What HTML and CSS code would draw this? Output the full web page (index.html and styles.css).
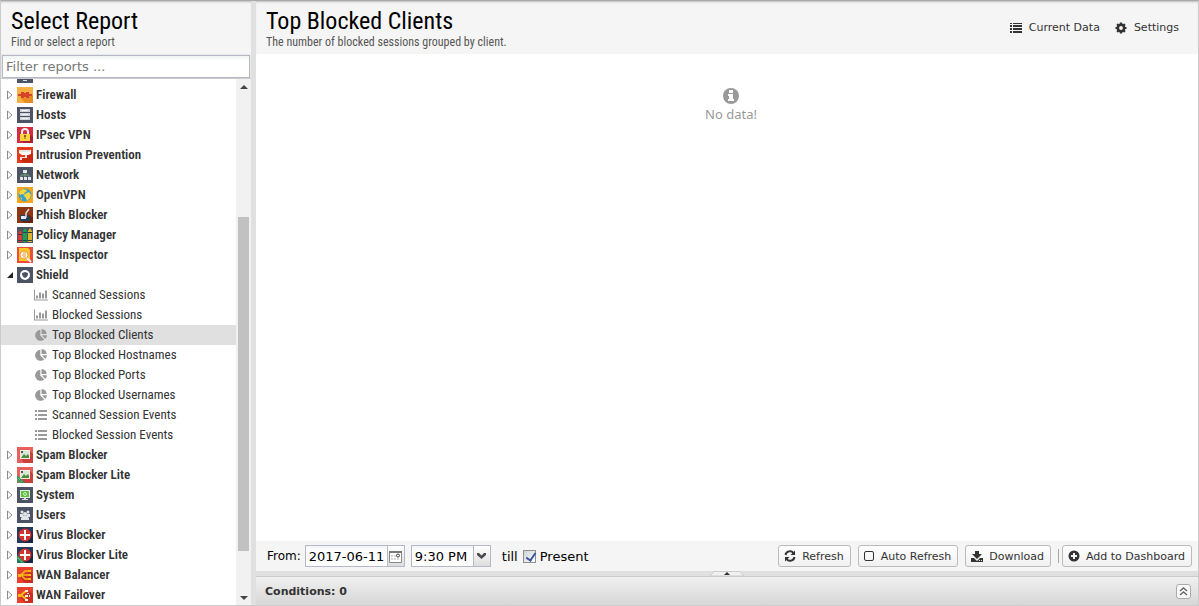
FILE: index.html
```
<!DOCTYPE html>
<html lang="en">
<head>
    <meta charset="utf-8">
    <title>Reports</title>
    <link rel="stylesheet" href="styles.css">
</head>
<body>
    <!-- icons shared by several rows -->
    <svg class="defs" aria-hidden="true">
        <symbol id="arrow" viewBox="0 0 6 10"><path d="M.5 1v8L5 5z" fill="#fff" stroke="#8c8c8c"/></symbol>
        <symbol id="arrow-open" viewBox="0 0 6 10"><path d="M6 2v6H0z" fill="#222"/></symbol>
        <symbol id="chart" viewBox="0 0 14 11"><path d="M0 0h1v10h13v1H0zM2 6h2v3H2zM5 3h2v6H5zM8 4h2v5H8zM11 1h2v8h-2z" fill="#999"/></symbol>
        <symbol id="pie" viewBox="0 0 14 12"><path d="M6.300 .8v5.600l4 4A5.500 5.500 0 1 1 6.300.8z M7.500 0a5.500 5.500 0 0 1 5.200 5H7.500z M7.900 6.300H13a5.500 5.500 0 0 1-1.700 3.600z" fill="#999"/></symbol>
        <symbol id="list" viewBox="0 0 14 10"><path d="M1 0h2v2H1zM4 0h9v2H4zM1 4h2v2H1zM4 4h9v2H4zM1 8h2v2H1zM4 8h9v2H4z" fill="#999"/></symbol>
        <symbol id="spam" viewBox="0 0 16 16"><path d="M0 0h16v16H0z" fill="#e9605a"/><path d="M13 4l3 3v9H7l-3-4z" fill="#c9403d"/><path d="M3 3h10v9H3z" fill="#f3eee4"/><path d="M4 4h8v7H4z" fill="#d8e6d4"/><path d="M4 11l3-4 2 2 2-2 1 2v2z" fill="#4c8c3c"/><path d="M4 4h2v2H4z" fill="#555"/></symbol>
        <symbol id="virus" viewBox="0 0 16 16"><path d="M0 0h16v16H0z" fill="#24395c"/><path d="M12 3l4 4v9H8l-5-4z" fill="#172745"/><circle cx="8" cy="8" r="6.500" fill="#d2342f"/><path d="M7 3h2v4h4v2H9v4H7V9H3V7h4z" fill="#fff"/></symbol>
        <symbol id="lite" viewBox="0 0 16 16"><path d="M0 8l8 8H4l-4-4z" fill="#2c9b5c"/><path d="M0 12l4 4H0z" fill="#2c9b5c" opacity=".6"/><path d="M1 11l4 4" stroke="#8fd0a8" stroke-dasharray="1 1"/></symbol>
    </svg>

    <aside class="sidebar">
        <header class="panel-header">
            <h1>Select Report</h1>
            <p>Find or select a report</p>
        </header>
        <div class="filter">
            <input type="text" aria-label="Filter reports" placeholder="Filter reports ...">
        </div>
        <div class="tree-wrap">
            <ul class="tree">
                <li><svg class="arrow"><use href="#arrow"/></svg><svg class="app" viewBox="0 0 16 16"><path d="M0 0h16v16H0z" fill="#4c5364"/><path d="M4 3h8v9H4zM6 13h4v1H6z" fill="#dfe3ea"/></svg></li>
                <li><svg class="arrow"><use href="#arrow"/></svg><svg class="app" viewBox="0 0 16 16"><path d="M0 0h16v16H0z" fill="#f4b042"/><path d="M12 6l4 3v7H8l-5-6z" fill="#e58c25"/><path d="M1 7h3V5h8v2h3v2h-3v2H4V9H1z" fill="#d4432a"/><path d="M7 5h2v1H7zM7 10h2v1H7z" fill="#f0a03a"/></svg>Firewall</li>
                <li><svg class="arrow"><use href="#arrow"/></svg><svg class="app" viewBox="0 0 16 16"><path d="M0 0h16v16H0z" fill="#4c5364"/><path d="M3 2h10v3H3zM3 6h10v3H3zM3 10h10v3H3z" fill="#cfd3d9"/><path d="M5 3h6v1H5zM5 7h6v1H5zM5 11h6v1H5z" fill="#eff1f3"/></svg>Hosts</li>
                <li><svg class="arrow"><use href="#arrow"/></svg><svg class="app" viewBox="0 0 16 16"><path d="M0 0h16v16H0z" fill="#d52b45"/><path d="M13 7l3 3v6H7l-4-3z" fill="#ab1f38"/><path d="M5 7V5a3 3 0 0 1 6 0v2" fill="none" stroke="#eee" stroke-width="2"/><path d="M3 7h10v7H3z" fill="#fbd440"/><path d="M7 8h2v2H7zM7.500 10h1v2h-1z" fill="#8a5b19"/></svg>IPsec VPN</li>
                <li><svg class="arrow"><use href="#arrow"/></svg><svg class="app" viewBox="0 0 16 16"><path d="M0 0h16v16H0z" fill="#e63b1a"/><path d="M14 5l2 2v9H7l-4-3z" fill="#c92b12"/><path d="M2 3h12v4l-3 1H5L2 6z" fill="#fff"/><path d="M8 8h2v3H5v2H3v-3h5z" fill="#f3dcd8"/><path d="M2 4h11" stroke="#c9c9c9"/></svg>Intrusion Prevention</li>
                <li><svg class="arrow"><use href="#arrow"/></svg><svg class="app" viewBox="0 0 16 16"><path d="M0 0h16v16H0z" fill="#4c5364"/><path d="M8 5v5M4 10V8h8v2" fill="none" stroke="#6fa27a"/><path d="M6 3h4v3H6zM3 10h3v3H3zM7 10h3v3H7zM11 10h3v3h-3z" fill="#e2e6e8"/></svg>Network</li>
                <li><svg class="arrow"><use href="#arrow"/></svg><svg class="app" viewBox="0 0 16 16"><path d="M0 0h16v16H0z" fill="#f9a51b"/><circle cx="8" cy="8" r="6.500" fill="#3aa0c8"/><path d="M3 4l3-2 4 1-1 2-2 1 1 2-3-1-2 1-1-2zM8 7l4-2 2 3-1 3-3 3-1-3-2-2zM3 10l2 1v2z" fill="#f6d63b"/></svg>OpenVPN</li>
                <li><svg class="arrow"><use href="#arrow"/></svg><svg class="app" viewBox="0 0 16 16"><path d="M0 0h16v16H0z" fill="#8e3712"/><path d="M12 8l4 3v5H7l-4-3z" fill="#682408"/><path d="M3 8h7l3 2v4H3z" fill="#24405f"/><path d="M4 9h5v3H4z" fill="#e7eaf0"/><path d="M12 2L9 6v4H7" fill="none" stroke="#d8dde3" stroke-width="1.500"/></svg>Phish Blocker</li>
                <li><svg class="arrow"><use href="#arrow"/></svg><svg class="app" viewBox="0 0 16 16"><path d="M0 0h16v16H0z" fill="#4c5364"/><path d="M1 6l2-3 2 3v9H1z" fill="#d63b35"/><path d="M6 4l2-3 2 3v11H6z" fill="#16a34a"/><path d="M11 4l2-3 2 3v11h-4z" fill="#dbb42b"/><path d="M1 7h4v1H1zM6 5h4v1H6zM11 5h4v1h-4zM1 13h4v1H1zM6 13h4v1H6zM11 13h4v1h-4z" fill="#333b44"/></svg>Policy Manager</li>
                <li><svg class="arrow"><use href="#arrow"/></svg><svg class="app" viewBox="0 0 16 16"><path d="M0 0h16v16H0z" fill="#ee4b3f"/><path d="M2 1h9l2 2v11H2z" fill="#f8c828"/><circle cx="7" cy="8" r="4" fill="#fff" stroke="#f19a29"/><path d="M5 8h4M6 6h3M6 10h3" stroke="#ef8d32"/><path d="M10 11l4 4" stroke="#eee" stroke-width="2"/></svg>SSL Inspector</li>
                <li><svg class="arrow"><use href="#arrow-open"/></svg><svg class="app" viewBox="0 0 16 16"><path d="M0 0h16v16H0z" fill="#4c5364"/><circle cx="8" cy="8" r="5" fill="#fff"/><path d="M8 5l3 1c0 3-1 4-3 5-2-1-3-2-3-5z" fill="#4c5364"/></svg>Shield</li>
                <li class="leaf"><svg><use href="#chart"/></svg>Scanned Sessions</li>
                <li class="leaf"><svg><use href="#chart"/></svg>Blocked Sessions</li>
                <li class="leaf selected"><svg><use href="#pie"/></svg>Top Blocked Clients</li>
                <li class="leaf"><svg><use href="#pie"/></svg>Top Blocked Hostnames</li>
                <li class="leaf"><svg><use href="#pie"/></svg>Top Blocked Ports</li>
                <li class="leaf"><svg><use href="#pie"/></svg>Top Blocked Usernames</li>
                <li class="leaf"><svg><use href="#list"/></svg>Scanned Session Events</li>
                <li class="leaf"><svg><use href="#list"/></svg>Blocked Session Events</li>
                <li><svg class="arrow"><use href="#arrow"/></svg><svg class="app"><use href="#spam"/></svg>Spam Blocker</li>
                <li><svg class="arrow"><use href="#arrow"/></svg><svg class="app"><use href="#spam"/><use href="#lite"/></svg>Spam Blocker Lite</li>
                <li><svg class="arrow"><use href="#arrow"/></svg><svg class="app" viewBox="0 0 16 16"><path d="M0 0h16v16H0z" fill="#4c5364"/><path d="M3 3h10v8H3z" fill="#e4ebdf"/><path d="M4 4h8v6H4z" fill="#5fbf3f"/><circle cx="8" cy="7" r="1.500" fill="none" stroke="#d8f0cf"/><path d="M7 11h2v1h2v1H5v-1h2z" fill="#d5d9dc"/></svg>System</li>
                <li><svg class="arrow"><use href="#arrow"/></svg><svg class="app" viewBox="0 0 16 16"><path d="M0 0h16v16H0z" fill="#4c5364"/><g fill="#e2e5e8"><circle cx="5" cy="5" r="1.500"/><circle cx="11" cy="5" r="1.500"/><circle cx="8" cy="7" r="2"/><path d="M3 7h3l1 3H3zM10 7h3v3H9zM4 13v-2l2-2h4l2 2v2z"/></g></svg>Users</li>
                <li><svg class="arrow"><use href="#arrow"/></svg><svg class="app"><use href="#virus"/></svg>Virus Blocker</li>
                <li><svg class="arrow"><use href="#arrow"/></svg><svg class="app"><use href="#virus"/><use href="#lite"/></svg>Virus Blocker Lite</li>
                <li><svg class="arrow"><use href="#arrow"/></svg><svg class="app" viewBox="0 0 16 16"><path d="M0 0h16v16H0z" fill="#e8402c"/><path d="M13 4l3 3v9H8l-5-6z" fill="#c92f22"/><path d="M3 8h9M12 4H8L4 8l4 4h4" fill="none" stroke="#fcb817" stroke-width="1.500"/><path d="M1 7h3v3H1zM11 3h3v2h-3zM11 7h3v2h-3zM11 11h3v2h-3z" fill="#fcb817"/></svg>WAN Balancer</li>
                <li><svg class="arrow"><use href="#arrow"/></svg><svg class="app" viewBox="0 0 16 16"><path d="M0 0h16v16H0z" fill="#e8402c"/><path d="M13 4l3 3v9H8l-5-6z" fill="#c92f22"/><path d="M9 4L4 8l5 4" fill="none" stroke="#fcb817" stroke-width="2"/><path d="M1 7h3v3H1z" fill="#fcb817"/><path d="M8 3h3v2H8zM10 6h2v1h-2zM8 8h3v2H8zM12 8h1v2h-1zM8 12h3v2H8z" fill="#fbeee0"/></svg>WAN Failover</li>
            </ul>
            <div class="scrollbar">
                <svg viewBox="0 0 8 4"><path d="M4 0l4 4H0z"/></svg>
                <div class="track"><div class="thumb"></div></div>
                <svg viewBox="0 0 8 4"><path d="M0 0h8L4 4z"/></svg>
            </div>
        </div>
    </aside>

    <main class="report">
        <header class="panel-header report-header">
            <div>
                <h1>Top Blocked Clients</h1>
                <p>The number of blocked sessions grouped by client.</p>
            </div>
            <nav class="header-tools">
                <button type="button">
                    <svg width="12" height="10" viewBox="0 0 12 10"><path d="M0 0h2v1H0zM3 0h9v1H3zM0 2h2v2H0zM3 2h9v2H3zM0 5h2v2H0zM3 5h9v2H3zM0 8h2v2H0zM3 8h9v2H3z"/></svg>
                    Current Data
                </button>
                <button type="button">
                    <svg width="12" height="12" viewBox="0 0 12 12"><circle cx="6" cy="6" r="3.200" fill="none" stroke="#333" stroke-width="2.600"/><path d="M6 .5v2M6 9.500v2M.5 6h2M9.500 6h2M2.100 2.100l1.400 1.400M8.500 8.500l1.400 1.400M2.100 9.900l1.400-1.400M8.500 3.500l1.400-1.400" stroke="#333" stroke-width="2.200"/></svg>
                    Settings
                </button>
            </nav>
        </header>

        <section class="chart">
            <svg width="16" height="16" viewBox="0 0 16 16"><circle cx="8" cy="8" r="8" fill="#999"/><path d="M6 2h4v3H6zM5 6h5v5h1v2H5v-2h1V8H5z" fill="#fff"/></svg>
            <p>No data!</p>
        </section>

        <footer class="toolbar">
            <label class="caption" for="from-date">From:</label>
            <div class="field date">
                <input type="text" id="from-date" value="2017-06-11">
                <button type="button" aria-label="Pick date">
                    <svg width="13" height="13" viewBox="0 0 13 13"><path d="M.5 1.500h12v11H.5z" fill="#fff" stroke="#888"/><path d="M0 1h13v2H0z" fill="#777"/><path d="M2 5h2v2H2zM5 5h2v2H5zM2 8h2v2H2zM5 8h2v2H5zM8 8h2v2H8z" fill="#d5d5d5"/><circle cx="9" cy="5.500" r="1.500" fill="#fff" stroke="#444"/></svg>
                </button>
            </div>
            <div class="field time">
                <select aria-label="Time"><option>9:30 PM</option></select>
                <span class="trigger"><svg width="9" height="6" viewBox="0 0 9 6"><path d="M0 0h2l2.500 2.500L7 0h2v2L4.500 6 0 2z" fill="#4a4a4a"/></svg></span>
            </div>
            <label class="till" for="present">till</label>
            <input type="checkbox" id="present" checked>
            <label for="present">Present</label>

            <div class="actions">
                <button type="button">
                    <svg width="12" height="12" viewBox="0 0 12 12"><path d="M1.500 5a4.500 4.500 0 0 1 8-2M10.500 7a4.500 4.500 0 0 1-8 2" fill="none" stroke="#333" stroke-width="2"/><path d="M11 .5V5H6.500zM1 11.500V7h4.500z"/></svg>
                    Refresh
                </button>
                <button type="button">
                    <svg width="11" height="10" viewBox="0 0 11 10"><rect x=".5" y=".5" width="9" height="9" rx="1.500" fill="none" stroke="#333"/></svg>
                    Auto Refresh
                </button>
                <button type="button">
                    <svg width="12" height="11" viewBox="0 0 12 11"><path d="M4 0h4v3h3L6 8 1 3h3zM0 7h3l3 3 3-3h3v4H0z"/><path d="M8 9h1v1H8zM10 9h1v1h-1z" fill="#eee"/></svg>
                    Download
                </button>
                <span class="separator"></span>
                <button type="button">
                    <svg width="12" height="12" viewBox="0 0 12 12"><circle cx="6" cy="6" r="5.500"/><path d="M5 3h2v2h2v2H7v2H5V7H3V5h2z" fill="#f5f5f5"/></svg>
                    Add to Dashboard
                </button>
            </div>
        </footer>

        <div class="splitter">
            <svg width="34" height="5" viewBox="0 0 34 5"><path d="M0 5l4-4.500h26L34 5z" fill="#f0f0f0" stroke="#ccc"/><path d="M17 1l3 3h-6z" fill="#333"/></svg>
        </div>

        <section class="conditions">
            <h2>Conditions: 0</h2>
            <button type="button" aria-label="Expand conditions">
                <svg width="9" height="9" viewBox="0 0 9 9"><path d="M1 4l3.500-3L8 4M1 8l3.500-3L8 8" fill="none" stroke="#666" stroke-width="1.400"/></svg>
            </button>
        </section>
    </main>
</body>
</html>
```

FILE: styles.css
```
* { box-sizing: border-box; }
body {
    margin: 0;
    height: 100vh;
    display: flex;
    gap: 5px;
    overflow: hidden;
    background: #e0e0e0;
    border: 1px solid #ccc;
    border-top-color: #aaa;
    font-family: "DejaVu Sans", sans-serif;
    font-size: 13px;
    color: #000;
}
h1, h2, p, ul { margin: 0; padding: 0; font-weight: normal; }
button { font-family: inherit; font-size: 11px; color: #333; cursor: pointer; }
svg { flex: none; display: block; }
.defs { position: absolute; width: 0; height: 0; }

.panel-header {
    height: 53px;
    padding: 7px 10px;
    background: #f5f5f5;
    box-shadow: inset 0 2px 2px -1px #bbb;
    font-family: "Roboto Condensed", "Liberation Sans Narrow", Roboto, sans-serif;
}
.panel-header h1 { font-size: 24px; line-height: 27px; }
.panel-header p { font-size: 12px; line-height: 15px; color: #555; }

/* report tree */
.sidebar { width: 250px; flex: none; display: flex; flex-direction: column; background: #f5f5f5; }
.filter { padding: 1px 1px 0; border-bottom: 1px solid #ccc; background: #e8e8e8; }
.filter input {
    display: block;
    width: 100%;
    height: 23px;
    padding: 0 3px;
    border: 1px solid #b5b8c8;
    background: linear-gradient(#f0f4f5, #fff 5px);
    font: inherit;
}
.filter input::placeholder { color: #777; }
.tree-wrap { flex: 1; min-height: 0; display: flex; overflow: hidden; background: #fff; }
.tree {
    flex: 1;
    margin-top: -14px;
    list-style: none;
    font-family: "Roboto Condensed", "Liberation Sans Narrow", Roboto, sans-serif;
    color: #333;
}
.tree li { display: flex; align-items: center; height: 20px; padding-left: 6px; line-height: 14px; font-weight: 600; white-space: nowrap; }
.tree .arrow { width: 6px; height: 10px; margin-right: 4px; }
.tree .app { width: 16px; height: 16px; margin-right: 3px; }
.tree .leaf { padding-left: 33px; font-weight: normal; }
.tree .leaf svg { width: 14px; height: 12px; margin-right: 4px; }
.tree .selected { background: #e0e0e0; }
.scrollbar {
    width: 15px;
    padding: 6px 2px 5px;
    display: flex;
    flex-direction: column;
    align-items: center;
    background: #f1f1f1;
}
.scrollbar > svg { width: 8px; height: 4px; fill: #444; }
.track { flex: 1; width: 11px; padding: 128px 0 45px; display: flex; }
.thumb { flex: 1; background: #c1c1c1; }

/* report */
.report { flex: 1; min-width: 0; display: flex; flex-direction: column; }
.report-header { display: flex; justify-content: space-between; }
.header-tools { display: flex; align-items: center; gap: 15px; height: 39px; padding-right: 9px; font-family: "DejaVu Sans", sans-serif; }
.header-tools button { display: flex; align-items: center; gap: 7px; padding: 0; border: 0; background: none; }
.header-tools svg, .actions svg { fill: #333; }
.chart {
    flex: 1;
    display: flex;
    flex-direction: column;
    align-items: center;
    padding: 34px 0 0 8px;
    background: #fff;
    color: #999;
    font-family: "Noto Sans", sans-serif;
}
.chart p { line-height: 20px; }

.toolbar { display: flex; align-items: center; height: 30px; padding: 0 6px 0 11px; background: #f5f5f5; }
.field { display: flex; height: 22px; border: 1px solid #b5b8c8; background: linear-gradient(#f0f4f5, #fff 5px); }
.field input, .field select { min-width: 0; flex: 1; padding: 0 3px; border: 0; background: none; font: inherit; appearance: none; }
.field button, .trigger {
    width: 17px;
    padding: 0;
    display: flex;
    align-items: center;
    justify-content: center;
    border: 0;
    border-left: 1px solid #b5b8c8;
    background: linear-gradient(#fff, #ddd);
}
.caption { font-size: 12px; }
.date { width: 100px; margin: 0 6px 0 4px; }
.time { width: 80px; }
.till { margin: 0 5px 0 11px; }
.toolbar input[type="checkbox"] {
    appearance: none;
    position: relative;
    width: 13px;
    height: 13px;
    margin: 0 4px 0 0;
    border: 1px solid #8e8f8f;
    background: linear-gradient(135deg, #ccd2d8, #fff);
}
.toolbar input[type="checkbox"]:checked::after {
    content: "";
    position: absolute;
    left: 4px;
    top: 0;
    width: 4px;
    height: 8px;
    border: solid #3c55a0;
    border-width: 0 2px 2px 0;
    transform: rotate(35deg);
}
.actions { display: flex; align-items: center; gap: 7px; margin-left: auto; }
.actions button {
    display: flex;
    align-items: center;
    gap: 6px;
    height: 22px;
    padding: 0 6px 0 5px;
    border: 1px solid #bbb;
    border-radius: 3px;
    background: linear-gradient(#fff, #f0f0f0);
    white-space: nowrap;
}
.separator { width: 1px; height: 14px; margin-right: -4px; background: #aca899; }

.splitter { display: flex; justify-content: center; height: 5px; }
.conditions {
    display: flex;
    align-items: center;
    justify-content: space-between;
    height: 29px;
    padding: 0 7px 0 9px;
    border-top: 1px solid #ccc;
    background: linear-gradient(#f0f0f0, #d6d6d6);
}
.conditions h2 { font-size: 11px; font-weight: bold; color: #333; }
.conditions button {
    width: 15px;
    height: 15px;
    padding: 0;
    display: flex;
    align-items: center;
    justify-content: center;
    border: 1px solid #aaa;
    border-radius: 3px;
    background: #f8f8f8;
}
```
